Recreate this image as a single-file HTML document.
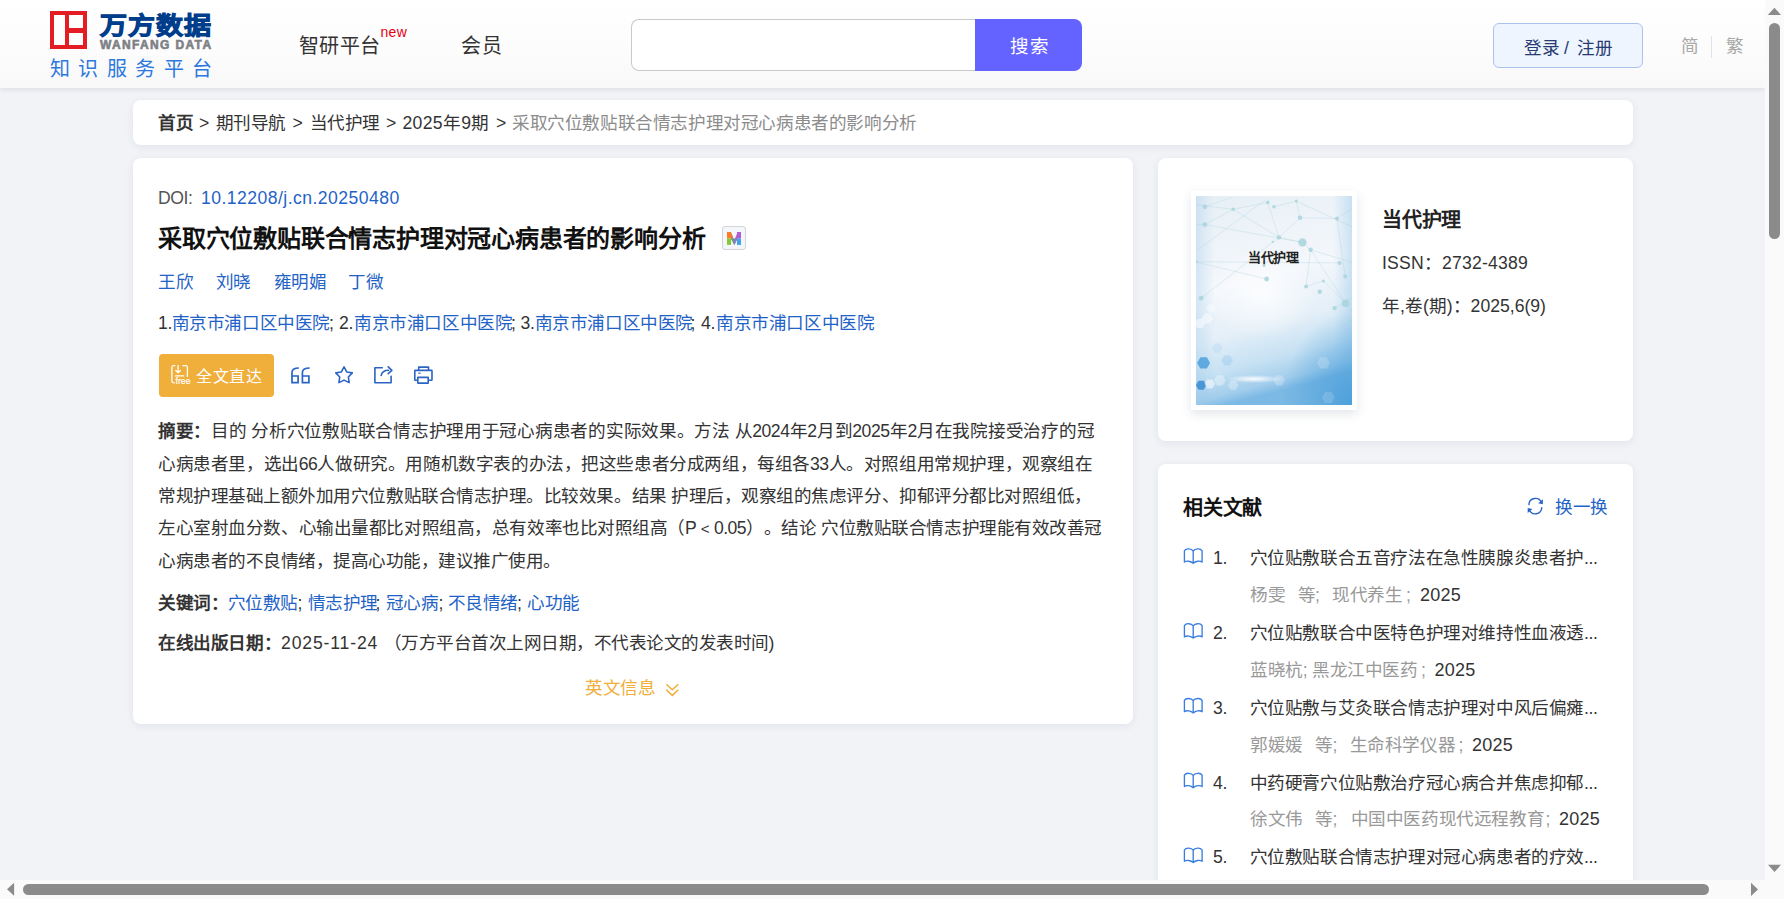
<!DOCTYPE html>
<html lang="zh-CN"><head><meta charset="utf-8">
<style>
*{margin:0;padding:0;box-sizing:border-box}
html,body{width:1784px;height:899px;overflow:hidden}
body{background:#f1f3f7;font-family:"Liberation Sans",sans-serif;color:#333;position:relative}
.t{position:absolute;white-space:nowrap;line-height:20px;font-size:17.6px;letter-spacing:-0.4px;text-spacing-trim:space-all}
.bx{position:absolute}
.card{position:absolute;background:#fff;border-radius:8px;box-shadow:0 2px 8px rgba(30,40,60,.075)}
.bl{color:#1f63c6}
.g{color:#999}
b{font-weight:bold}
</style></head>
<body>
<!-- header -->
<div class="bx" style="left:0;top:0;width:1765px;height:88px;background:linear-gradient(#fff 0%,#fcfcfc 60%,#f8f8f9 100%);box-shadow:0 2px 5px rgba(20,30,60,.09)"></div>
<div class="bx" style="left:50px;top:11px;width:37px;height:38px;border:4px solid #e41c23;border-top-width:4.5px"></div>
<div class="bx" style="left:65px;top:11px;width:4px;height:38px;background:#e41c23"></div>
<div class="bx" style="left:65px;top:28px;width:22px;height:4.5px;background:#e41c23"></div>
<div class="t" style="left:99.5px;top:14px;font-size:27px;line-height:20px;letter-spacing:1px;color:#003e8c;font-weight:bold;-webkit-text-stroke:1.1px #003e8c;transform:scaleY(0.9);transform-origin:0 24px">万方数据</div>
<div class="t" style="left:100px;top:35px;font-size:12px;line-height:20px;letter-spacing:1.35px;color:#7e8085;font-weight:bold;-webkit-text-stroke:0.6px #7e8085">WANFANG DATA</div>
<div class="t" style="left:49.5px;top:59px;font-size:20px;line-height:20px;letter-spacing:8.6px;color:#2d78de">知识服务平台</div>

<div class="t" style="left:298.5px;top:36px;font-size:20px;letter-spacing:0.5px;color:#333">智研平台</div>
<div class="t" style="left:380.5px;top:22.3px;font-size:14px;letter-spacing:0.3px;color:#e50012">new</div>
<div class="t" style="left:461px;top:36px;font-size:20px;letter-spacing:0.8px;color:#333">会员</div>

<div class="bx" style="left:631px;top:19px;width:352px;height:52px;border:1px solid #c9c9c9;border-right:none;border-radius:8px 0 0 8px;background:#fff"></div>
<div class="bx" style="left:975px;top:19px;width:107px;height:52px;background:#6563ff;border-radius:0 8px 8px 0"></div>
<div class="t" style="left:1010px;top:36.7px;font-size:18.5px;letter-spacing:0.6px;color:#fff">搜索</div>

<div class="bx" style="left:1493px;top:23px;width:150px;height:45px;border:1px solid #a9c3ee;border-radius:6px;background:#eef5fe"></div>
<div class="t" style="left:1524px;top:37.6px;color:#283a72">登录</div><div class="t" style="left:1564px;top:37.6px;color:#283a72">/</div><div class="t" style="left:1577px;top:37.6px;color:#283a72">注册</div>
<div class="t" style="left:1681px;top:36px;font-size:17.6px;color:#a8a8a8">简</div>
<div class="bx" style="left:1711px;top:36px;width:1px;height:22px;background:#e2e2e2"></div>
<div class="t" style="left:1725.5px;top:36px;font-size:17.6px;color:#a8a8a8">繁</div>

<!-- breadcrumb -->
<div class="card" style="left:133px;top:100px;width:1500px;height:45px"></div>
<div class="t" style="left:158px;top:113px;font-weight:bold">首页</div>
<div class="t" style="left:199px;top:113px">&gt;</div>
<div class="t" style="left:215.5px;top:113px">期刊导航</div>
<div class="t" style="left:292.5px;top:113px">&gt;</div>
<div class="t" style="left:309.5px;top:113px">当代护理</div>
<div class="t" style="left:386px;top:113px">&gt;</div>
<div class="t" style="left:402.5px;top:113px;letter-spacing:0.3px">2025年9期</div>
<div class="t" style="left:496px;top:113px">&gt;</div>
<div class="t" style="left:512px;top:113px;color:#8c8c8c">采取穴位敷贴联合情志护理对冠心病患者的影响分析</div>

<!-- main card -->
<div class="card" style="left:133px;top:158px;width:1000px;height:566px"></div>
<div class="t" style="left:158px;top:187.8px;color:#555">DOI:</div>
<div class="t bl" style="left:201px;top:187.8px;letter-spacing:0.45px">10.12208/j.cn.20250480</div>
<div class="t" style="left:158px;top:229px;font-size:24px;letter-spacing:-0.2px;font-weight:bold;color:#111">采取穴位敷贴联合情志护理对冠心病患者的影响分析</div>
<div class="bx" style="left:722px;top:226px;width:24px;height:24px;border:1.5px solid #d2d4d8;border-radius:3px;background:#f3f7fc"></div>

<div class="t bl" style="left:158px;top:272px">王欣</div>
<div class="t bl" style="left:215.5px;top:272px">刘晓</div>
<div class="t bl" style="left:273.5px;top:272px">雍明媚</div>
<div class="t bl" style="left:348px;top:272px">丁微</div>

<div class="t" style="left:158px;top:313px">1.</div><div class="t bl" style="left:171.5px;top:313px">南京市浦口区中医院</div><div class="t" style="left:329px;top:313px">;</div>
<div class="t" style="left:339px;top:313px">2.</div><div class="t bl" style="left:354px;top:313px">南京市浦口区中医院</div><div class="t" style="left:511px;top:313px">;</div>
<div class="t" style="left:520.5px;top:313px">3.</div><div class="t bl" style="left:534.5px;top:313px">南京市浦口区中医院</div><div class="t" style="left:690.5px;top:313px">;</div>
<div class="t" style="left:701px;top:313px">4.</div><div class="t bl" style="left:716px;top:313px">南京市浦口区中医院</div>

<div class="bx" style="left:159px;top:354px;width:115px;height:43px;background:#f0ae3a;border-radius:4px"></div>
<div class="t" style="left:196px;top:366.7px;font-size:16px;letter-spacing:0.7px;color:#fff">全文直达</div>

<div class="t" id="ab0" style="left:158px;top:421.3px;width:936px;text-align:justify;text-align-last:justify;letter-spacing:-0.5px"><b>摘要：</b>目的 分析穴位敷贴联合情志护理用于冠心病患者的实际效果。方法 从2024年2月到2025年2月在我院接受治疗的冠</div>
<div class="t" id="ab1" style="left:158px;top:453.6px;width:934.5px;text-align:justify;text-align-last:justify;letter-spacing:-0.5px">心病患者里，选出66人做研究。用随机数字表的办法，把这些患者分成两组，每组各33人。对照组用常规护理，观察组在</div>
<div class="t" id="ab2" style="left:158px;top:485.9px;width:934px;text-align:justify;text-align-last:justify;letter-spacing:-0.5px">常规护理基础上额外加用穴位敷贴联合情志护理。比较效果。结果 护理后，观察组的焦虑评分、抑郁评分都比对照组低，</div>
<div class="t" id="ab3" style="left:158px;top:518.2px;width:944px;text-align:justify;text-align-last:justify;letter-spacing:-0.5px">左心室射血分数、心输出量都比对照组高，总有效率也比对照组高（P<span style="display:inline-block;width:17.6px;text-align:center;text-align-last:center;font-size:15px;letter-spacing:0">&lt;</span>0.05）。结论 穴位敷贴联合情志护理能有效改善冠</div>
<div class="t" id="ab4" style="left:158px;top:550.5px;letter-spacing:-0.5px">心病患者的不良情绪，提高心功能，建议推广使用。</div>

<div class="t" style="left:158px;top:592.5px;font-weight:bold">关键词：</div>
<div class="t bl" style="left:227.5px;top:592.5px">穴位敷贴</div><div class="t" style="left:297.5px;top:592.5px">;</div>
<div class="t bl" style="left:307.5px;top:592.5px">情志护理</div><div class="t" style="left:375.5px;top:592.5px">;</div>
<div class="t bl" style="left:385.5px;top:592.5px">冠心病</div><div class="t" style="left:438.5px;top:592.5px">;</div>
<div class="t bl" style="left:447.5px;top:592.5px">不良情绪</div><div class="t" style="left:517px;top:592.5px">;</div>
<div class="t bl" style="left:527px;top:592.5px">心功能</div>

<div class="t" style="left:158px;top:633px;font-weight:bold">在线出版日期：</div>
<div class="t" style="left:281px;top:633px;letter-spacing:0.85px">2025-11-24</div>
<div class="t" style="left:383.5px;top:633px;letter-spacing:-0.5px">（万方平台首次上网日期，不代表论文的发表时间)</div>
<div class="t" style="left:585px;top:677.7px;color:#f0ae3a">英文信息</div>

<!-- journal card -->
<div class="card" style="left:1158px;top:158px;width:475px;height:283px"></div>
<div class="bx" style="left:1191px;top:191px;width:166px;height:219px;background:#fff;box-shadow:0 4px 10px rgba(40,60,90,.13)"></div>
<div class="bx" id="cover" style="left:1196px;top:196px;width:156px;height:209px;overflow:hidden"><svg width="156" height="209" viewBox="0 0 156 209" style="position:absolute;left:0;top:0">
<defs>
<linearGradient id="cg" x1="0" y1="0" x2="0.2" y2="1"><stop offset="0" stop-color="#e6eff6"/><stop offset="0.45" stop-color="#f4f7fb"/><stop offset="0.68" stop-color="#e4eff8"/><stop offset="0.84" stop-color="#c6e1f3"/><stop offset="0.95" stop-color="#a2cdec"/><stop offset="1" stop-color="#7cb9e4"/></linearGradient><radialGradient id="cbr" cx="1" cy="1" r="0.45"><stop offset="0" stop-color="#3f98d8" stop-opacity="0.75"/><stop offset="1" stop-color="#3f98d8" stop-opacity="0"/></radialGradient>
<radialGradient id="cw" cx="0.45" cy="0.5" r="0.45">
<stop offset="0" stop-color="#fff" stop-opacity="0.8"/><stop offset="1" stop-color="#fff" stop-opacity="0"/>
</radialGradient>
<linearGradient id="cl" x1="0" y1="0" x2="1" y2="0">
<stop offset="0" stop-color="#8fc0e4" stop-opacity="0.3"/><stop offset="0.12" stop-color="#8fc0e4" stop-opacity="0"/><stop offset="0.88" stop-color="#6fb2e0" stop-opacity="0"/><stop offset="1" stop-color="#6fb2e0" stop-opacity="0.3"/>
</linearGradient>
<radialGradient id="fl" cx="0.5" cy="0.5" r="0.5">
<stop offset="0" stop-color="#fff" stop-opacity="0.95"/><stop offset="1" stop-color="#fff" stop-opacity="0"/>
</radialGradient>
</defs>
<rect width="156" height="209" fill="url(#cg)"/>
<rect width="156" height="209" fill="url(#cl)"/><rect width="156" height="209" fill="url(#cbr)"/>
<ellipse cx="72" cy="98" rx="62" ry="50" fill="url(#cw)"/>
<g stroke="#a9d0d9" stroke-width="0.6" stroke-opacity="0.55"><line x1="-1.1" y1="8.8" x2="37.2" y2="13.3"/><line x1="37.2" y1="13.3" x2="8.8" y2="28.6"/><line x1="37.2" y1="13.3" x2="83.0" y2="41.4"/><line x1="8.8" y1="28.6" x2="106.4" y2="46.4"/><line x1="71.8" y1="6.4" x2="83.0" y2="41.4"/><line x1="78.0" y1="10.8" x2="100.3" y2="5.1"/><line x1="100.3" y1="5.1" x2="104.0" y2="21.7"/><line x1="104.0" y1="21.7" x2="83.0" y2="41.4"/><line x1="104.0" y1="21.7" x2="141.0" y2="22.4"/><line x1="83.0" y1="41.4" x2="106.4" y2="46.4"/><line x1="106.4" y1="46.4" x2="114.6" y2="53.8"/><line x1="114.6" y1="53.8" x2="110.1" y2="90.4"/><line x1="110.1" y1="90.4" x2="127.4" y2="84.9"/><line x1="0.2" y1="65.7" x2="143.5" y2="66.9"/><line x1="5.1" y1="102.2" x2="83.0" y2="41.4"/><line x1="141.0" y1="22.4" x2="149.2" y2="80.5"/><line x1="114.6" y1="53.8" x2="149.7" y2="107.2"/><line x1="37.2" y1="13.3" x2="71.8" y2="6.4"/><line x1="-1.1" y1="28.6" x2="8.8" y2="28.6"/><line x1="100.3" y1="5.1" x2="162.0" y2="33.5"/><line x1="141.0" y1="22.4" x2="162.0" y2="8.8"/><line x1="127.4" y1="84.9" x2="149.7" y2="107.2"/><line x1="138.6" y1="112.1" x2="162.0" y2="97.8"/><line x1="70.6" y1="83.0" x2="-1.1" y2="65.7"/><line x1="69.4" y1="3.9" x2="-1.1" y2="55.8"/><line x1="149.7" y1="107.2" x2="162.0" y2="122.5"/><line x1="36.0" y1="1.4" x2="8.8" y2="10.8"/><line x1="114.6" y1="53.8" x2="162.0" y2="68.1"/></g>
<g fill="#a8d3dc" fill-opacity="0.85"><circle cx="8.8" cy="10.8" r="2.2"/><circle cx="37.2" cy="13.3" r="1.8"/><circle cx="8.8" cy="28.6" r="2.4"/><circle cx="71.8" cy="6.4" r="1.8"/><circle cx="78.0" cy="10.8" r="1.8"/><circle cx="100.3" cy="5.1" r="1.5"/><circle cx="104.0" cy="21.7" r="2.2"/><circle cx="141.0" cy="22.4" r="2.0"/><circle cx="83.0" cy="41.4" r="2.2"/><circle cx="106.4" cy="46.4" r="4.2"/><circle cx="114.6" cy="53.8" r="2.2"/><circle cx="76.8" cy="45.9" r="1.2"/><circle cx="70.6" cy="83.0" r="2.4"/><circle cx="110.1" cy="90.4" r="2.0"/><circle cx="123.7" cy="95.8" r="2.2"/><circle cx="127.4" cy="84.9" r="1.5"/><circle cx="5.1" cy="102.2" r="2.4"/><circle cx="149.7" cy="107.2" r="3.8"/><circle cx="138.6" cy="112.1" r="2.2"/><circle cx="149.2" cy="80.5" r="2.0"/><circle cx="0.2" cy="65.7" r="1.5"/><circle cx="143.5" cy="66.9" r="2.0"/><circle cx="154.6" cy="125.0" r="1.8"/><circle cx="68.1" cy="69.4" r="1.5"/></g>
<polygon points="14.1,167.0 10.8,172.6 4.4,172.6 1.1,167.0 4.4,161.3 10.8,161.3" fill="#3d97d8" fill-opacity="0.75"/><polygon points="10.3,189.2 7.7,193.7 2.5,193.7 -0.1,189.2 2.5,184.7 7.7,184.7" fill="#2f86cf" fill-opacity="0.8"/><polygon points="19.0,188.0 16.4,192.5 11.2,192.5 8.6,188.0 11.2,183.4 16.4,183.4" fill="#ffffff" fill-opacity="0.55"/><polygon points="29.6,184.3 26.6,189.4 20.8,189.4 17.8,184.3 20.8,179.2 26.6,179.2" fill="#ffffff" fill-opacity="0.35"/><polygon points="17.1,122.5 14.2,127.6 8.4,127.6 5.4,122.5 8.4,117.4 14.2,117.4" fill="#ffffff" fill-opacity="0.45"/><polygon points="9.1,127.4 6.5,132.0 1.3,132.0 -1.3,127.4 1.3,122.9 6.5,122.9" fill="#ffffff" fill-opacity="0.5"/><polygon points="19.6,112.6 17.3,116.6 12.7,116.6 10.4,112.6 12.7,108.6 17.3,108.6" fill="#ffffff" fill-opacity="0.4"/><polygon points="26.4,152.1 23.8,156.7 18.6,156.7 16.0,152.1 18.6,147.6 23.8,147.6" fill="#bcdcf2" fill-opacity="0.5"/><polygon points="9.8,147.2 6.8,152.3 1.0,152.3 -2.0,147.2 1.0,142.1 6.8,142.1" fill="#cfe6f5" fill-opacity="0.5"/><polygon points="37.0,164.5 34.0,169.6 28.2,169.6 25.3,164.5 28.2,159.4 34.0,159.4" fill="#8cc3ea" fill-opacity="0.35"/><polygon points="42.4,189.2 39.8,193.7 34.6,193.7 32.0,189.2 34.6,184.7 39.8,184.7" fill="#ffffff" fill-opacity="0.3"/><polygon points="88.8,184.3 85.9,189.4 80.1,189.4 77.2,184.3 80.1,179.2 85.9,179.2" fill="#ffffff" fill-opacity="0.25"/><polygon points="133.9,167.0 130.7,172.6 124.2,172.6 120.9,167.0 124.2,161.3 130.7,161.3" fill="#ffffff" fill-opacity="0.18"/><polygon points="138.9,201.6 135.7,207.2 129.2,207.2 125.9,201.6 129.2,195.9 135.7,195.9" fill="#ffffff" fill-opacity="0.15"/>
<ellipse cx="58" cy="183" rx="28" ry="4" fill="url(#fl)"/>
</svg></div>
<div class="t" style="left:1248px;top:248px;font-size:13px;letter-spacing:-0.3px;font-weight:bold;color:#222">当代护理</div>
<div class="t" style="left:1382px;top:210.2px;font-size:20px;letter-spacing:-0.2px;font-weight:bold;color:#222">当代护理</div>
<div class="t" style="left:1382px;top:253.3px;letter-spacing:0.2px">ISSN：2732-4389</div>
<div class="t" style="left:1382px;top:296px;letter-spacing:0px">年,卷(期)：2025,6(9)</div>

<!-- related card -->
<div class="card" style="left:1158px;top:464px;width:475px;height:450px"></div>
<div class="t" style="left:1183px;top:498px;font-size:20px;letter-spacing:-0.2px;font-weight:bold;color:#111">相关文献</div>
<div class="t bl" style="left:1555px;top:497px">换一换</div>

<div class="t" style="left:1213px;top:548.2px">1.</div>
<div class="t" style="left:1249.5px;top:548.2px">穴位贴敷联合五音疗法在急性胰腺炎患者护...</div>
<div class="t g" style="left:1250px;top:585px">杨雯</div><div class="t g" style="left:1297.5px;top:585px">等;</div><div class="t g" style="left:1332px;top:585px">现代养生</div><div class="t g" style="left:1406px;top:585px">;</div><div class="t" style="left:1420px;top:585px;letter-spacing:0.2px;font-size:18px">2025</div>

<div class="t" style="left:1213px;top:623px">2.</div>
<div class="t" style="left:1249.5px;top:623px">穴位贴敷联合中医特色护理对维持性血液透...</div>
<div class="t g" style="left:1250px;top:659.8px">蓝晓杭;</div><div class="t g" style="left:1312px;top:659.8px">黑龙江中医药</div><div class="t g" style="left:1421px;top:659.8px">;</div><div class="t" style="left:1434.5px;top:659.8px;letter-spacing:0.2px;font-size:18px">2025</div>

<div class="t" style="left:1213px;top:697.8px">3.</div>
<div class="t" style="left:1249.5px;top:697.8px">穴位贴敷与艾灸联合情志护理对中风后偏瘫...</div>
<div class="t g" style="left:1250px;top:734.6px">郭媛媛</div><div class="t g" style="left:1315px;top:734.6px">等;</div><div class="t g" style="left:1349.5px;top:734.6px">生命科学仪器</div><div class="t g" style="left:1458.5px;top:734.6px">;</div><div class="t" style="left:1472px;top:734.6px;letter-spacing:0.2px;font-size:18px">2025</div>

<div class="t" style="left:1213px;top:772.6px">4.</div>
<div class="t" style="left:1249.5px;top:772.6px">中药硬膏穴位贴敷治疗冠心病合并焦虑抑郁...</div>
<div class="t g" style="left:1250px;top:809.4px">徐文伟</div><div class="t g" style="left:1315px;top:809.4px">等;</div><div class="t g" style="left:1350.5px;top:809.4px">中国中医药现代远程教育</div><div class="t g" style="left:1545.5px;top:809.4px">;</div><div class="t" style="left:1559px;top:809.4px;letter-spacing:0.2px;font-size:18px">2025</div>

<div class="t" style="left:1213px;top:847.4px">5.</div>
<div class="t" style="left:1249.5px;top:847.4px">穴位敷贴联合情志护理对冠心病患者的疗效...</div>

<!-- scrollbars -->
<div class="bx" style="left:1765px;top:0;width:19px;height:880px;background:#fafafa"></div>
<div class="bx" style="left:0;top:880px;width:1784px;height:19px;background:#fafafa"></div>
<div class="bx" style="left:1769px;top:23px;width:11px;height:216px;background:#8b8b8b;border-radius:5.5px"></div>
<div class="bx" style="left:23px;top:884px;width:1686px;height:11px;background:#8b8b8b;border-radius:5.5px"></div>

<!-- icon overlay -->
<svg class="bx" style="left:0;top:0" width="1784" height="899" viewBox="0 0 1784 899">
<!-- scroll arrows -->
<path d="M1774.45,7.8 L1781,14.9 L1767.8,14.9 Z" fill="#8b8b8b"/>
<path d="M1768,864.8 L1781,864.8 L1774.5,871.9 Z" fill="#8b8b8b"/>
<path d="M14.1,882.7 L14.1,895.8 L7,889.25 Z" fill="#8b8b8b"/>
<path d="M1751,882.8 L1751,896 L1758,889.4 Z" fill="#8b8b8b"/>
<!-- free icon -->
<g fill="none" stroke="#fff" stroke-width="1.3" stroke-linecap="round" stroke-linejoin="round">
<path d="M174.8,365.7 H173.7 Q171.9,365.7 171.9,367.5 V381.1 Q171.9,382.9 173.7,382.9 H174.2"/>
<path d="M182.9,365.7 H185.6 Q187.4,365.7 187.4,367.5 V376.4"/>
<path d="M178.1,365.4 V372.8 M175.8,370.5 L178.1,372.9 L180.4,370.5"/>
<path d="M175.5,375.9 H183.8"/>
</g>
<text x="175.5" y="384" font-family="Liberation Sans" font-size="8.7" fill="#fff" letter-spacing="0" stroke="#fff" stroke-width="0.2">free</text>
<!-- quote 66 -->
<g fill="none" stroke="#2a64c4" stroke-width="1.7" stroke-linejoin="miter">
<path d="M298.9,368 C294.5,368 292,369.2 292,372.5 V382.7 H298.1 V376 H292"/>
<path d="M309.7,368 C305.3,368 302.4,369.2 302.4,372.5 V382.7 H308.9 V376 H302.4"/>
</g>
<!-- star -->
<path fill="none" stroke="#2a64c4" stroke-width="1.6" stroke-linejoin="round" d="M344.05,366.90 L346.72,371.92 L352.32,372.91 L348.38,377.01 L349.16,382.64 L344.05,380.15 L338.94,382.64 L339.72,377.01 L335.78,372.91 L341.38,371.92 Z"/>
<!-- share -->
<g fill="none" stroke="#2a64c4" stroke-width="1.6" stroke-linejoin="round" stroke-linecap="round">
<path d="M382.3,367.8 H374.9 V382.8 H391.1 V376.3"/>
<path d="M381.2,375.4 C381.8,372.2 384.2,370.2 388.6,370.2"/>
<path d="M388.2,366.9 L391.9,370.3 L388.2,373.6"/>
</g>
<!-- print -->
<g fill="none" stroke="#2a64c4" stroke-width="1.6" stroke-linejoin="round">
<path d="M418.7,370.3 V367.1 H428.5 V370.3"/>
<path d="M417.6,380.3 H415.3 C414.9,380.3 414.8,380.1 414.8,379.7 V371 C414.8,370.6 414.9,370.4 415.3,370.4 H431.5 C431.9,370.4 432,370.6 432,371 V379.7 C432,380.1 431.9,380.3 431.5,380.3 H428.4"/>
<path d="M417.8,377.4 H428.2 V383.1 H417.8 Z"/>
</g>
<path d="M418.3,373.2 H420.6" stroke="#2a64c4" stroke-width="1.2"/>
<!-- M icon -->
<g>
<rect x="727" y="232" width="4" height="6.5" fill="#fb7d1f"/>
<rect x="727" y="238.5" width="4" height="6.4" fill="#84c932"/>
<path d="M731,232 L734.3,240.5 L734.3,245 L731,238.5 Z" fill="#e46e5c"/>
<path d="M731,238.5 L734.3,245 L737.6,238.5 Z" fill="#4fa08c"/>
<path d="M737.6,232 L734.3,240.5 L734.3,245 L737.6,238.5 Z" fill="#9a74c8"/>
<rect x="737" y="232" width="4" height="6.5" fill="#b65bd8"/>
<rect x="737" y="238.5" width="4" height="6.4" fill="#43a2e9"/>
</g>
<!-- chevrons -->
<g fill="none" stroke="#f0ae3a" stroke-width="1.5" stroke-linejoin="miter">
<path d="M666.3,684.2 L672.3,689.8 L678.3,684.2"/>
<path d="M666.3,689.8 L672.3,695.4 L678.3,689.8"/>
</g>
<!-- refresh -->
<g fill="none" stroke="#2a64c4" stroke-width="1.4" stroke-linecap="round">
<path d="M1541.4,502.4 A6.5,6.5 0 0 0 1528.9,504.6"/>
<path d="M1529.2,509.8 A6.5,6.5 0 0 0 1541.7,507.6"/>
</g>
<path fill="#2a64c4" d="M1542.9,499.3 L1542.9,504.2 L1538.2,503.3 Z"/>
<path fill="#2a64c4" d="M1527.7,512.9 L1527.7,508 L1532.4,508.9 Z"/>
<g transform="translate(0,0.0)" fill="none" stroke="#3a7ee0" stroke-width="1.35" stroke-linejoin="round">
<path d="M1193.2,551 C1191.5,548.6 1186,547.9 1184.4,550.8 V562.1 C1186.5,560.4 1191,561.2 1193.2,563.3 C1195.4,561.2 1199.9,560.4 1202.1,562.1 V550.8 C1200.4,547.9 1194.9,548.6 1193.2,551 Z M1193.2,551 V563"/>
</g><g transform="translate(0,74.8)" fill="none" stroke="#3a7ee0" stroke-width="1.35" stroke-linejoin="round">
<path d="M1193.2,551 C1191.5,548.6 1186,547.9 1184.4,550.8 V562.1 C1186.5,560.4 1191,561.2 1193.2,563.3 C1195.4,561.2 1199.9,560.4 1202.1,562.1 V550.8 C1200.4,547.9 1194.9,548.6 1193.2,551 Z M1193.2,551 V563"/>
</g><g transform="translate(0,149.6)" fill="none" stroke="#3a7ee0" stroke-width="1.35" stroke-linejoin="round">
<path d="M1193.2,551 C1191.5,548.6 1186,547.9 1184.4,550.8 V562.1 C1186.5,560.4 1191,561.2 1193.2,563.3 C1195.4,561.2 1199.9,560.4 1202.1,562.1 V550.8 C1200.4,547.9 1194.9,548.6 1193.2,551 Z M1193.2,551 V563"/>
</g><g transform="translate(0,224.4)" fill="none" stroke="#3a7ee0" stroke-width="1.35" stroke-linejoin="round">
<path d="M1193.2,551 C1191.5,548.6 1186,547.9 1184.4,550.8 V562.1 C1186.5,560.4 1191,561.2 1193.2,563.3 C1195.4,561.2 1199.9,560.4 1202.1,562.1 V550.8 C1200.4,547.9 1194.9,548.6 1193.2,551 Z M1193.2,551 V563"/>
</g><g transform="translate(0,299.2)" fill="none" stroke="#3a7ee0" stroke-width="1.35" stroke-linejoin="round">
<path d="M1193.2,551 C1191.5,548.6 1186,547.9 1184.4,550.8 V562.1 C1186.5,560.4 1191,561.2 1193.2,563.3 C1195.4,561.2 1199.9,560.4 1202.1,562.1 V550.8 C1200.4,547.9 1194.9,548.6 1193.2,551 Z M1193.2,551 V563"/>
</g></svg>
</body></html>
